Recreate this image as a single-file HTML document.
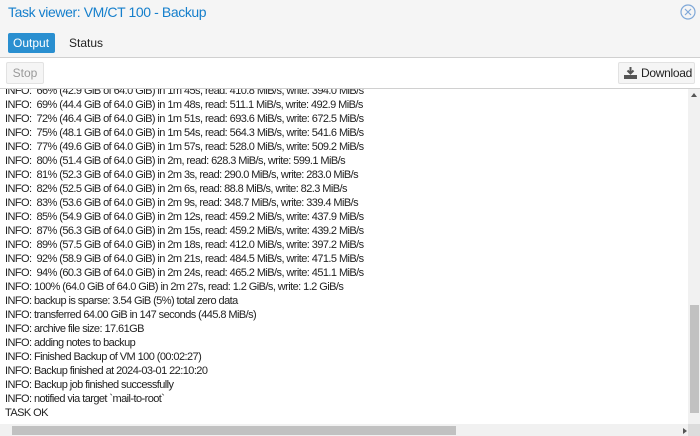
<!DOCTYPE html>
<html><head><meta charset="utf-8"><style>
*{margin:0;padding:0;box-sizing:border-box}
body{width:700px;height:436px;overflow:hidden;background:#fff;font-family:"Liberation Sans",sans-serif;position:relative}
.title{position:absolute;left:0;top:0;width:700px;height:58px;background:#f5f5f5;border-bottom:1px solid #d0d0d0}
.title h1{position:absolute;left:8px;top:4px;font-size:14px;font-weight:normal;color:#157fcc;letter-spacing:-0.4px}
.close{position:absolute;left:680px;top:4px;width:16px;height:16px}
.tab{position:absolute;top:33px;height:20px;font-size:12px;line-height:20px;padding:0 5px}
.t1{left:8px;width:47px;background:#2a8fd0;color:#fff;border-radius:2px}
.t2{left:64px;color:#222}
.tb{position:absolute;left:0;top:58px;width:700px;height:31px;border-bottom:1px solid #d0d0d0;background:#fff}
.btn{position:absolute;top:4px;height:22px;border:1px solid #e2e2e2;background:#f5f5f5;font-size:12px;line-height:20px;border-radius:2px}
.stop{left:6px;width:38px;color:#999;text-align:center}
.dl{left:618px;width:77px;color:#222;padding-left:22px;letter-spacing:-0.3px}
.log{position:absolute;left:0;top:89px;width:688px;height:335px;overflow:hidden}
.log pre{position:absolute;left:5px;top:-5px;font-family:"Liberation Sans",sans-serif;font-size:11px;line-height:14px;color:#222;letter-spacing:-0.57px}
.vs{position:absolute;left:688px;top:89px;width:12px;height:335px;background:#f1f1f1}
.vt{position:absolute;left:690px;top:305px;width:9px;height:108px;background:#c1c1c1}
.hs{position:absolute;left:0;top:424px;width:688px;height:12px;background:#f1f1f1}
.ht{position:absolute;left:12px;top:426px;width:444px;height:9px;background:#c1c1c1}
.corner{position:absolute;left:688px;top:424px;width:12px;height:12px;background:#dcdcdc}
</style></head><body>
<div class="title"><h1>Task viewer: VM/CT 100 - Backup</h1>
<svg class="close" viewBox="0 0 16 16"><circle cx="8" cy="8" r="7" fill="none" stroke="#7fa8d8" stroke-width="1.2"/><path d="M5 5L11 11M11 5L5 11" stroke="#7fa8d8" stroke-width="1.2"/></svg>
<div class="tab t1">Output</div><div class="tab t2">Status</div></div>
<div class="tb"><div class="btn stop">Stop</div>
<div class="btn dl"><svg style="position:absolute;left:5px;top:4px" width="13" height="12" viewBox="0 0 13 12"><path d="M6.5 0V6M3.5 3.5L6.5 6.5L9.5 3.5" stroke="#555" stroke-width="2" fill="none"/><rect x="0" y="8" width="13" height="4" fill="#555"/></svg>Download</div></div>
<div class="log"><pre>INFO:  66% (42.9 GiB of 64.0 GiB) in 1m 45s, read: 410.8 MiB/s, write: 394.0 MiB/s
INFO:  69% (44.4 GiB of 64.0 GiB) in 1m 48s, read: 511.1 MiB/s, write: 492.9 MiB/s
INFO:  72% (46.4 GiB of 64.0 GiB) in 1m 51s, read: 693.6 MiB/s, write: 672.5 MiB/s
INFO:  75% (48.1 GiB of 64.0 GiB) in 1m 54s, read: 564.3 MiB/s, write: 541.6 MiB/s
INFO:  77% (49.6 GiB of 64.0 GiB) in 1m 57s, read: 528.0 MiB/s, write: 509.2 MiB/s
INFO:  80% (51.4 GiB of 64.0 GiB) in 2m, read: 628.3 MiB/s, write: 599.1 MiB/s
INFO:  81% (52.3 GiB of 64.0 GiB) in 2m 3s, read: 290.0 MiB/s, write: 283.0 MiB/s
INFO:  82% (52.5 GiB of 64.0 GiB) in 2m 6s, read: 88.8 MiB/s, write: 82.3 MiB/s
INFO:  83% (53.6 GiB of 64.0 GiB) in 2m 9s, read: 348.7 MiB/s, write: 339.4 MiB/s
INFO:  85% (54.9 GiB of 64.0 GiB) in 2m 12s, read: 459.2 MiB/s, write: 437.9 MiB/s
INFO:  87% (56.3 GiB of 64.0 GiB) in 2m 15s, read: 459.2 MiB/s, write: 439.2 MiB/s
INFO:  89% (57.5 GiB of 64.0 GiB) in 2m 18s, read: 412.0 MiB/s, write: 397.2 MiB/s
INFO:  92% (58.9 GiB of 64.0 GiB) in 2m 21s, read: 484.5 MiB/s, write: 471.5 MiB/s
INFO:  94% (60.3 GiB of 64.0 GiB) in 2m 24s, read: 465.2 MiB/s, write: 451.1 MiB/s
INFO: 100% (64.0 GiB of 64.0 GiB) in 2m 27s, read: 1.2 GiB/s, write: 1.2 GiB/s
INFO: backup is sparse: 3.54 GiB (5%) total zero data
INFO: transferred 64.00 GiB in 147 seconds (445.8 MiB/s)
INFO: archive file size: 17.61GB
INFO: adding notes to backup
INFO: Finished Backup of VM 100 (00:02:27)
INFO: Backup finished at 2024-03-01 22:10:20
INFO: Backup job finished successfully
INFO: notified via target `mail-to-root`
TASK OK</pre></div>
<div class="vs"></div><div class="vt"></div>
<div class="hs"></div><div class="ht"></div><div class="corner"></div>
<div style="position:absolute;left:691px;top:93px;width:0;height:0;border-left:3px solid transparent;border-right:3px solid transparent;border-bottom:4px solid #555"></div>
<div style="position:absolute;left:683px;top:428px;width:0;height:0;border-top:3px solid transparent;border-bottom:3px solid transparent;border-left:4px solid #555"></div>
</body></html>
